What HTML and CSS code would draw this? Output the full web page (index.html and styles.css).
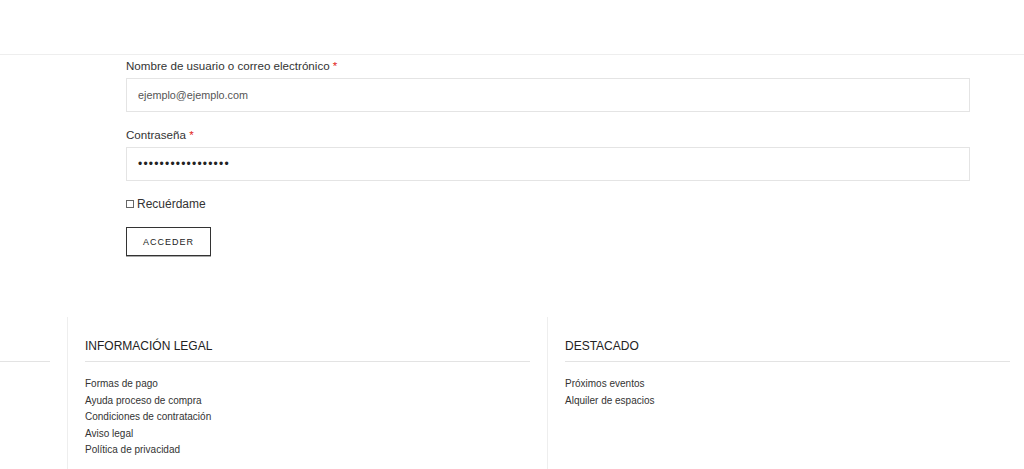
FILE: index.html
```html
<!DOCTYPE html>
<html lang="es">
<head>
  <meta charset="UTF-8" />
  <meta name="viewport" content="width=device-width, initial-scale=1.0"/>
  <title>Mi cuenta</title>
  <link rel="stylesheet" href="styles.css">
</head>
<body>

  <header class="site-header"></header>

  <form class="login-form" onsubmit="return false;">
    <label class="field-label" for="username">Nombre de usuario o correo electrónico <span class="required">*</span></label>
    <input class="field-input" type="text" id="username" value="ejemplo@ejemplo.com" />

    <label class="field-label" for="password">Contraseña <span class="required">*</span></label>
    <input class="field-input pass" type="password" id="password" value="contrasena-123456" />

    <label class="remember">
      <input type="checkbox" class="check" /> Recuérdame
    </label>

    <button class="btn-login" type="submit">ACCEDER</button>
  </form>

  <footer class="site-footer">
    <div class="footer-col first">
      <h3 class="footer-title">&nbsp;</h3>
    </div>

    <div class="footer-col">
      <h3 class="footer-title">INFORMACIÓN LEGAL</h3>
      <ul class="footer-links">
        <li><a href="#">Formas de pago</a></li>
        <li><a href="#">Ayuda proceso de compra</a></li>
        <li><a href="#">Condiciones de contratación</a></li>
        <li><a href="#">Aviso legal</a></li>
        <li><a href="#">Política de privacidad</a></li>
      </ul>
    </div>

    <div class="footer-col last">
      <h3 class="footer-title">DESTACADO</h3>
      <ul class="footer-links">
        <li><a href="#">Próximos eventos</a></li>
        <li><a href="#">Alquiler de espacios</a></li>
      </ul>
    </div>
  </footer>

</body>
</html>
```

FILE: styles.css
```css
* {
  box-sizing: border-box;
  margin: 0;
  padding: 0;
  font-family: 'Liberation Sans', Arial, sans-serif;
}

body {
  background-color: #fff;
  color: #333;
}

.site-header {
  height: 55px;
  border-bottom: 1px solid #eeeeee;
}

.login-form {
  width: 844px;
  margin-left: 126px;
  padding-top: 2px;
  display: flex;
  flex-direction: column;
  align-items: flex-start;
}

.field-label {
  font-size: 11.6px;
  line-height: 18px;
  color: #333;
  margin-bottom: 3px;
}

.field-label + .field-input + .field-label {
  margin-top: 14px;
}

.required {
  color: #e2231a;
}

.field-input {
  width: 100%;
  height: 34px;
  border: 1px solid #e4e4e4;
  padding: 0 11px;
  font-size: 10.8px;
  color: #555;
  outline: none;
  background: #fff;
}

.field-input.pass {
  font-size: 12px;
  letter-spacing: 1.2px;
  color: #222;
}

.remember {
  display: flex;
  align-items: center;
  gap: 3px;
  margin-top: 14px;
  font-size: 12px;
  line-height: 18px;
  color: #333;
}

.check {
  appearance: none;
  -webkit-appearance: none;
  width: 8px;
  height: 8px;
  border: 1px solid #666;
  background: #fff;
  margin: 0;
}

.btn-login {
  margin-top: 14px;
  width: 85px;
  height: 29px;
  background: #fff;
  border: 1px solid #333;
  box-shadow: 0 1px 0 #aaa;
  font-size: 9px;
  letter-spacing: 1px;
  color: #222;
  cursor: pointer;
}

.site-footer {
  margin-top: 61px;
  display: grid;
  grid-template-columns: 68px 480px 1fr;
}

.footer-col {
  border-right: 1px solid #eeeeee;
  padding: 21px 17px 30px 17px;
}

.footer-col.first {
  padding-left: 0;
}

.footer-col.last {
  border-right: none;
  padding-right: 14px;
}

.footer-title {
  font-size: 12px;
  font-weight: normal;
  line-height: 16px;
  color: #222;
  padding-bottom: 7px;
  border-bottom: 1px solid #e3e3e3;
}

.footer-links {
  list-style: none;
  margin-top: 14px;
}

.footer-links li {
  font-size: 10px;
  line-height: 16.5px;
}

.footer-links a {
  color: #333;
  text-decoration: none;
}
```
